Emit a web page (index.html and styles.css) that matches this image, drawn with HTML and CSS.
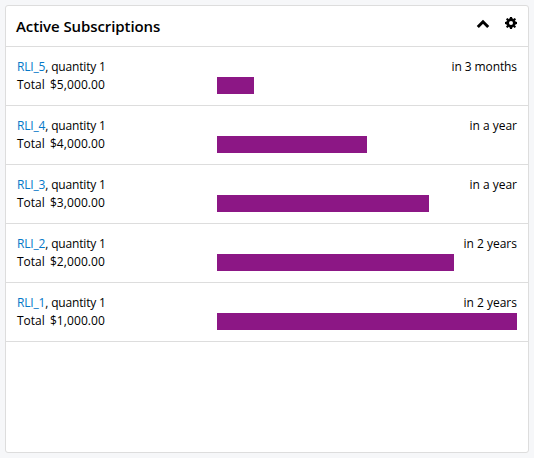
FILE: index.html
```html
<!DOCTYPE html>
<html lang="en">
<head>
<meta charset="utf-8">
<title>Active Subscriptions</title>
<link rel="stylesheet" href="styles.css">
</head>
<body>
<section class="dashlet">
  <header class="dashlet-header">
    <h4 class="title">Active Subscriptions</h4>
    <div class="actions">
      <svg class="chevron" width="14" height="10" viewBox="0 0 14 10"><path d="M1.800 8 7 2.800l5.200 5.200" fill="none" stroke="#000" stroke-width="3"/></svg>
      <svg class="gear" width="12" height="12" viewBox="0 0 12 12"><g fill="#000"><path fill-rule="evenodd" d="M6 1.300a4.700 4.700 0 1 0 0 9.400a4.700 4.700 0 1 0 0-9.400zM6 4a2 2 0 1 1 0 4a2 2 0 1 1 0-4z"/><path d="M5 0h2l.4 2H4.600zM5 12h2l.4-2H4.600zM0 5v2l2 .4V4.600zM12 5v2l-2 .4V4.600zM1 2.300 2.300 1l1.700 1.200-1.800 1.800zM11 2.300 9.700 1 8 2.200 9.800 4zM1 9.700 2.300 11 4 9.800 2.200 8zM11 9.700 9.700 11 8 9.800 9.800 8z"/></g></svg>
    </div>
  </header>
  <ul class="list">
    <li class="row">
      <div class="info"><p class="product"><a class="link">RLI_5</a>, quantity 1</p><p>Total <span class="amount">$5,000.00</span></p></div>
      <div class="timeline"><p class="when months">in 3 months</p><div class="bar" style="width:37px"></div></div>
    </li>
    <li class="row">
      <div class="info"><p class="product"><a class="link">RLI_4</a>, quantity 1</p><p>Total <span class="amount">$4,000.00</span></p></div>
      <div class="timeline"><p class="when">in a year</p><div class="bar" style="width:150px"></div></div>
    </li>
    <li class="row">
      <div class="info"><p class="product"><a class="link">RLI_3</a>, quantity 1</p><p>Total <span class="amount">$3,000.00</span></p></div>
      <div class="timeline"><p class="when">in a year</p><div class="bar" style="width:212px"></div></div>
    </li>
    <li class="row">
      <div class="info"><p class="product"><a class="link">RLI_2</a>, quantity 1</p><p>Total <span class="amount">$2,000.00</span></p></div>
      <div class="timeline"><p class="when">in 2 years</p><div class="bar" style="width:237px"></div></div>
    </li>
    <li class="row">
      <div class="info"><p class="product"><a class="link">RLI_1</a>, quantity 1</p><p>Total <span class="amount">$1,000.00</span></p></div>
      <div class="timeline"><p class="when">in 2 years</p><div class="bar" style="width:300px"></div></div>
    </li>
  </ul>
</section>
</body>
</html>
```
FILE: styles.css
```css
* { box-sizing: border-box; }
body {
  margin: 0;
  padding: 5px;
  background: #f6f7f9;
  color: #000;
  font: 12px/18px "Open Sans", sans-serif;
}
p, h4, ul { margin: 0; padding: 0; }
.dashlet {
  width: 524px;
  height: 448px;
  background: #fff;
  border: 1px solid #ddd;
  border-radius: 3px;
}
.dashlet-header {
  display: flex;
  justify-content: space-between;
  height: 41px;
  padding: 0 11px 0 10px;
  border-bottom: 1px solid #ddd;
}
.title {
  font-size: 15px;
  font-weight: 600;
  line-height: 40px;
  letter-spacing: -0.09px;
}
.actions {
  display: flex;
  gap: 15px;
  padding-top: 11px;
}
.chevron { margin-top: 2px; }
.list { list-style: none; }
.row {
  display: grid;
  grid-template-columns: 200px 300px;
  height: 59px;
  padding: 11px;
  border-bottom: 1px solid #ddd;
}
.product { letter-spacing: -0.17px; }
.link { color: #0679c8; }
.amount {
  margin-left: 2px;
  letter-spacing: 0.09px;
}
.when { text-align: right; }
.months { letter-spacing: -0.1px; }
.bar {
  height: 17px;
  margin-top: 1px;
  background: #8c1785;
}
```
